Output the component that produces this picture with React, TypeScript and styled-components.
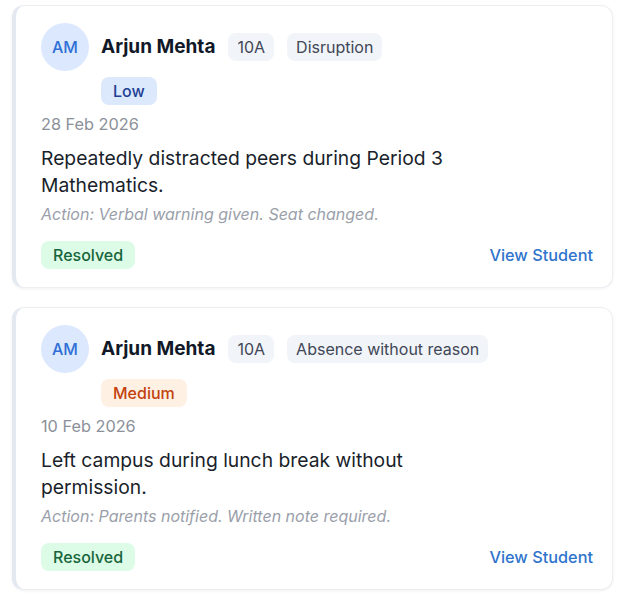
import React from "react";
import styled, { createGlobalStyle } from "styled-components";

const GlobalStyle = createGlobalStyle`
  html, body {
    margin: 0;
    padding: 0;
    background: #ffffff;
    font-family: Inter, "Noto Sans", "Liberation Sans", sans-serif;
    -webkit-font-smoothing: antialiased;
  }
  * { box-sizing: border-box; }
`;

const List = styled.div`
  display: flex;
  flex-direction: column;
  gap: 19px;
  padding: 5px 15px 8px 12px;
`;

const Card = styled.article`
  background: #ffffff;
  border: 1px solid #eceef2;
  border-left: 4px solid #e3e8f1;
  border-radius: 12px;
  box-shadow: 0 1px 3px rgba(15, 23, 42, 0.06);
  padding: 17px 19px 18px 25px;
  display: flex;
  flex-direction: column;
`;

const Header = styled.div`
  display: flex;
  align-items: flex-start;
  gap: 12px;
`;

const Avatar = styled.div`
  width: 48px;
  height: 48px;
  border-radius: 50%;
  background: #dbe8fd;
  color: #2f6fd6;
  font-size: 16px;
  font-weight: 500;
  display: flex;
  align-items: center;
  justify-content: center;
  flex-shrink: 0;
`;

const Tags = styled.div`
  display: flex;
  flex-direction: column;
  align-items: flex-start;
  gap: 16px;
  padding-top: 10px;
`;

const TitleRow = styled.div`
  display: flex;
  flex-wrap: wrap;
  align-items: center;
  gap: 13px;
`;

const Name = styled.span`
  font-size: 19px;
  font-weight: 650;
  color: #111827;
  line-height: 28px;
`;

type Tone = "neutral" | "low" | "medium" | "resolved";

const toneColors: Record<Tone, { bg: string; fg: string }> = {
  neutral: { bg: "#f1f4f8", fg: "#404756" },
  low: { bg: "#dce8fc", fg: "#1e3f94" },
  medium: { bg: "#fff0e4", fg: "#c2410c" },
  resolved: { bg: "#dcfce7", fg: "#17653a" },
};

const Pill = styled.span<{ $tone: Tone }>`
  display: inline-flex;
  align-items: center;
  height: 28px;
  padding: 0 ${(p) => (p.$tone === "neutral" ? "9px" : "12px")};
  border-radius: 8px;
  font-size: 16px;
  font-weight: ${(p) => (p.$tone === "neutral" ? 400 : 500)};
  background: ${(p) => toneColors[p.$tone].bg};
  color: ${(p) => toneColors[p.$tone].fg};
`;

const DateText = styled.div`
  margin-top: 9px;
  font-size: 16.3px;
  line-height: 20px;
  color: #8b9099;
`;

const Description = styled.p`
  margin: 11px 0 0;
  max-width: 440px;
  font-size: 19.3px;
  line-height: 27px;
  color: #1a1f2b;
`;

const ActionText = styled.p`
  margin: 4px 0 0;
  font-size: 16px;
  line-height: 22px;
  font-style: italic;
  color: #9aa0aa;
`;

const Footer = styled.div`
  margin-top: 16px;
  display: flex;
  align-items: center;
  justify-content: space-between;
`;

const ViewLink = styled.a`
  font-size: 16.3px;
  font-weight: 500;
  color: #2f74cc;
  text-decoration: none;
  cursor: pointer;
`;

type Incident = {
  initials: string;
  name: string;
  className: string;
  category: string;
  severity: "low" | "medium";
  date: string;
  description: string;
  action: string;
  status: string;
};

const incidents: Incident[] = [
  {
    initials: "AM",
    name: "Arjun Mehta",
    className: "10A",
    category: "Disruption",
    severity: "low",
    date: "28 Feb 2026",
    description: "Repeatedly distracted peers during Period 3 Mathematics.",
    action: "Action: Verbal warning given. Seat changed.",
    status: "Resolved",
  },
  {
    initials: "AM",
    name: "Arjun Mehta",
    className: "10A",
    category: "Absence without reason",
    severity: "medium",
    date: "10 Feb 2026",
    description: "Left campus during lunch break without permission.",
    action: "Action: Parents notified. Written note required.",
    status: "Resolved",
  },
];

const severityLabel = { low: "Low", medium: "Medium" };

function IncidentCard({ item }: { item: Incident }) {
  return (
    <Card>
      <Header>
        <Avatar>{item.initials}</Avatar>
        <Tags>
          <TitleRow>
            <Name>{item.name}</Name>
            <Pill $tone="neutral">{item.className}</Pill>
            <Pill $tone="neutral">{item.category}</Pill>
          </TitleRow>
          <Pill $tone={item.severity}>{severityLabel[item.severity]}</Pill>
        </Tags>
      </Header>
      <DateText>{item.date}</DateText>
      <Description>{item.description}</Description>
      <ActionText>{item.action}</ActionText>
      <Footer>
        <Pill $tone="resolved">{item.status}</Pill>
        <ViewLink>View Student</ViewLink>
      </Footer>
    </Card>
  );
}

export default function App() {
  return (
    <>
      <GlobalStyle />
      <List>
        {incidents.map((item, i) => (
          <IncidentCard key={i} item={item} />
        ))}
      </List>
    </>
  );
}
